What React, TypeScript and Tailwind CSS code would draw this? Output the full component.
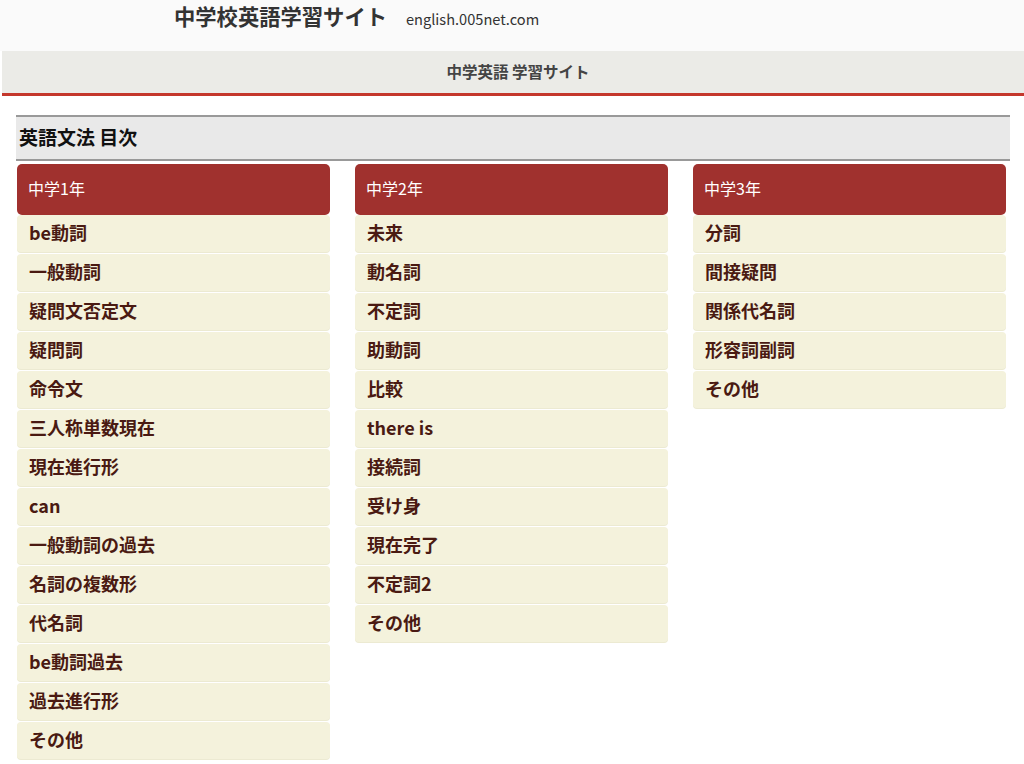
import React from "react";

type Column = {
  title: string;
  items: string[];
};

const columns: Column[] = [
  {
    title: "中学1年",
    items: [
      "be動詞",
      "一般動詞",
      "疑問文否定文",
      "疑問詞",
      "命令文",
      "三人称単数現在",
      "現在進行形",
      "can",
      "一般動詞の過去",
      "名詞の複数形",
      "代名詞",
      "be動詞過去",
      "過去進行形",
      "その他",
    ],
  },
  {
    title: "中学2年",
    items: [
      "未来",
      "動名詞",
      "不定詞",
      "助動詞",
      "比較",
      "there is",
      "接続詞",
      "受け身",
      "現在完了",
      "不定詞2",
      "その他",
    ],
  },
  {
    title: "中学3年",
    items: ["分詞", "間接疑問", "関係代名詞", "形容詞副詞", "その他"],
  },
];

function App() {
  return (
    <div className="min-h-[764px] bg-white font-['Noto_Sans_CJK_JP','Noto_Sans',sans-serif]">
      {/* site header */}
      <header className="h-[51px] bg-[#fafafa] flex items-start pl-[174px] pt-[1px]">
        <h1 className="text-[21.3px] font-bold text-[#333] leading-[30px]">中学校英語学習サイト</h1>
        <span className="ml-[19px] mt-[3px] text-[14.6px] text-[#333] leading-[30px]">english.005net.com</span>
      </header>

      {/* nav bar */}
      <nav className="ml-[2px] h-[45px] bg-[#ebebe7] border-b-[3px] border-[#c4372c] flex items-center justify-center">
        <span className="text-[15.5px] font-bold text-[#444] ml-[10px]">中学英語 学習サイト</span>
      </nav>

      {/* section heading */}
      <div className="mt-[19px] ml-[16px] mr-[14px] h-[46px] bg-[#e9e9e9] border-y-2 border-[#999] flex items-center pl-[3px]">
        <h2 className="text-[19px] font-bold text-[#111] -mt-[2px]">英語文法 目次</h2>
      </div>

      {/* columns */}
      <div className="mt-[3px] ml-[17px] w-[989px] grid grid-cols-3 gap-x-[25px] items-start">
        {columns.map((col) => (
          <div key={col.title}>
            <div className="h-[51px] bg-[#a0312e] rounded-[5px] flex items-center pl-[11px] pb-[3px]">
              <span className="text-[16px] text-white">{col.title}</span>
            </div>
            {col.items.map((item) => (
              <div
                key={item}
                className="h-[37px] mb-[2px] bg-[#f4f2dc] rounded-[4px] flex items-center pl-[12px] pb-[2px] shadow-[0_1px_0_#ecead2]"
              >
                <span className="text-[18px] font-bold text-[#4a1a12]">{item}</span>
              </div>
            ))}
          </div>
        ))}
      </div>
    </div>
  );
}

export default App;
